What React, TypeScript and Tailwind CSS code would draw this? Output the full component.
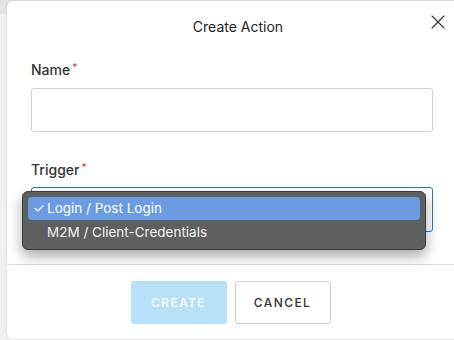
import { X } from 'lucide-react'

export default function App() {
  return (
    <main className="relative h-[340px] w-[454px] overflow-hidden bg-[#f1f1f1] font-['Inter',sans-serif]">
      <div className="h-[14px] w-full bg-[#e4e4e4]" />
      <div className="absolute left-[7px] top-[1px] h-[338px] w-[460px] rounded-md bg-white shadow-[0_0_3px_rgba(0,0,0,0.12)]">
        <div className="relative flex h-[50px] items-center justify-center">
          <h1 className="pl-[2px] text-[14px] font-normal text-[#1e1e1e]">Create Action</h1>
          <button className="absolute left-[419px] top-[9px] text-[#333]">
            <X size={24} strokeWidth={1.1} />
          </button>
        </div>

        <div className="px-[24px] pt-[8px]">
          <label className="flex items-start text-[14px] font-medium text-[#333]">
            Name<span className="ml-[2px] text-[10px] leading-[16px] text-[#e53e3e]">*</span>
          </label>
          <div className="mt-[8px] h-[44px] w-[402px] rounded-[3px] border border-[#cfcfcf]" />

          <label className="mt-[27px] flex items-start text-[14px] font-medium text-[#333]">
            Trigger<span className="ml-[2px] text-[10px] leading-[16px] text-[#e53e3e]">*</span>
          </label>
          <div className="mt-[7px] h-[45px] w-[402px] rounded-[3px] border-[1.5px] border-[#2f7aa6]" />
        </div>

        <div className="mt-[32px] h-px w-full bg-[#dedede]" />

        <div className="flex w-[447px] justify-center gap-[8px] pt-[16px]">
          <button className="h-[43px] w-[96px] rounded-[3px] bg-[#b6e1f6] text-[12px] font-medium tracking-[0.12em] text-white">
            CREATE
          </button>
          <button className="h-[43px] w-[96px] rounded-[3px] border border-[#cfcfcf] bg-white text-[12px] font-medium tracking-[0.12em] text-[#333]">
            CANCEL
          </button>
        </div>
      </div>

      <div className="absolute left-[22px] top-[191px] w-[404px] rounded-[6px] border border-[#3d3d3d] bg-[#5e5f5f] px-[5px] py-[5px] text-[13.5px] text-white shadow-[0_6px_14px_rgba(0,0,0,0.35)]">
        <div className="flex h-[23px] items-center rounded-[4px] bg-[#6a9be3] pl-[5px]">
          <span className="w-[14px]">✓</span>
          <span>Login / Post Login</span>
        </div>
        <div className="flex h-[24px] items-center pl-[19px] text-[#f1f1f1]">M2M / Client-Credentials</div>
      </div>
    </main>
  )
}
